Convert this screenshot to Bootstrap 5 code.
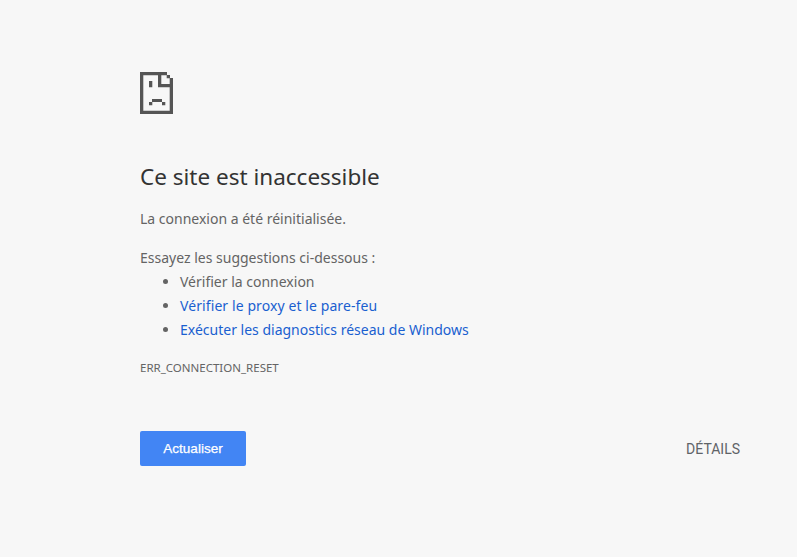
<!DOCTYPE html>
<html lang="fr">
<head>
<meta charset="utf-8">
<title>Ce site est inaccessible</title>
<link href="https://cdn.jsdelivr.net/npm/bootstrap@5.3.0/dist/css/bootstrap.min.css" rel="stylesheet">
<style>
html,body{height:100%;}
body{background:#f7f7f7;color:#646464;font-family:"Noto Sans","Liberation Sans",sans-serif;font-size:14px;line-height:24px;overflow:hidden;}
.err-page{width:600px;margin-left:140px;padding-top:72px;}
.err-icon{display:block;width:33px;height:42px;}
.err-title{color:#333;font-family:inherit;font-size:22.500px;font-weight:400;line-height:30px;margin:48px 0 0;}
.err-msg{margin:15px 0 0;}
.err-try{margin:15px 0 0;}
.err-list{margin:0;padding-left:40px;}
.err-list a{color:#1a5fd0;text-decoration:none;}
.err-wide{letter-spacing:.09px;}
.err-code{font-size:11.500px;line-height:16px;text-transform:uppercase;margin-top:18px;}
.err-actions{margin-top:55px;}
.err-btn{background:#4285f4;border:0;border-radius:2px;color:#fff;font-family:"Liberation Sans",sans-serif;font-size:13.500px;font-weight:400;-webkit-text-stroke:.25px #fff;line-height:16px;width:106px;height:35px;padding:0;}
.err-btn:hover{background:#4285f4;color:#fff;}
.err-details{color:#5f6368;font-family:Roboto,sans-serif;font-size:14px;line-height:16px;}
</style>
</head>
<body>
<main class="err-page">
<svg class="err-icon" viewBox="0 0 33 42" fill="#555"><path fill-rule="evenodd" d="M0 0H27V3H30V6H33V42H0ZM3.300 3.300V38.700H29.700V15.300H18V3.300ZM21.300 3.300V12H29.700V6.300H26.700V3.300Z"/><path d="M9 9H12.300V15.300H9ZM12 27H22V30H12ZM9 30H12.300V33.300H9ZM22 30H25.300V33.300H22Z"/></svg>
<h1 class="err-title">Ce site est inaccessible</h1>
<p class="err-msg">La connexion a été réinitialisée.</p>
<p class="err-try mb-0">Essayez les suggestions ci-dessous :</p>
<ul class="err-list">
<li>Vérifier la connexion</li>
<li><a class="err-wide" href="#">Vérifier le proxy et le pare-feu</a></li>
<li><a href="#">Exécuter les diagnostics réseau de Windows</a></li>
</ul>
<div class="err-code">ERR_CONNECTION_RESET</div>
<div class="err-actions d-flex justify-content-between align-items-center">
<button type="button" class="btn err-btn">Actualiser</button>
<span class="err-details">DÉTAILS</span>
</div>
</main>
<script src="https://cdn.jsdelivr.net/npm/bootstrap@5.3.0/dist/js/bootstrap.bundle.min.js"></script>
</body>
</html>
